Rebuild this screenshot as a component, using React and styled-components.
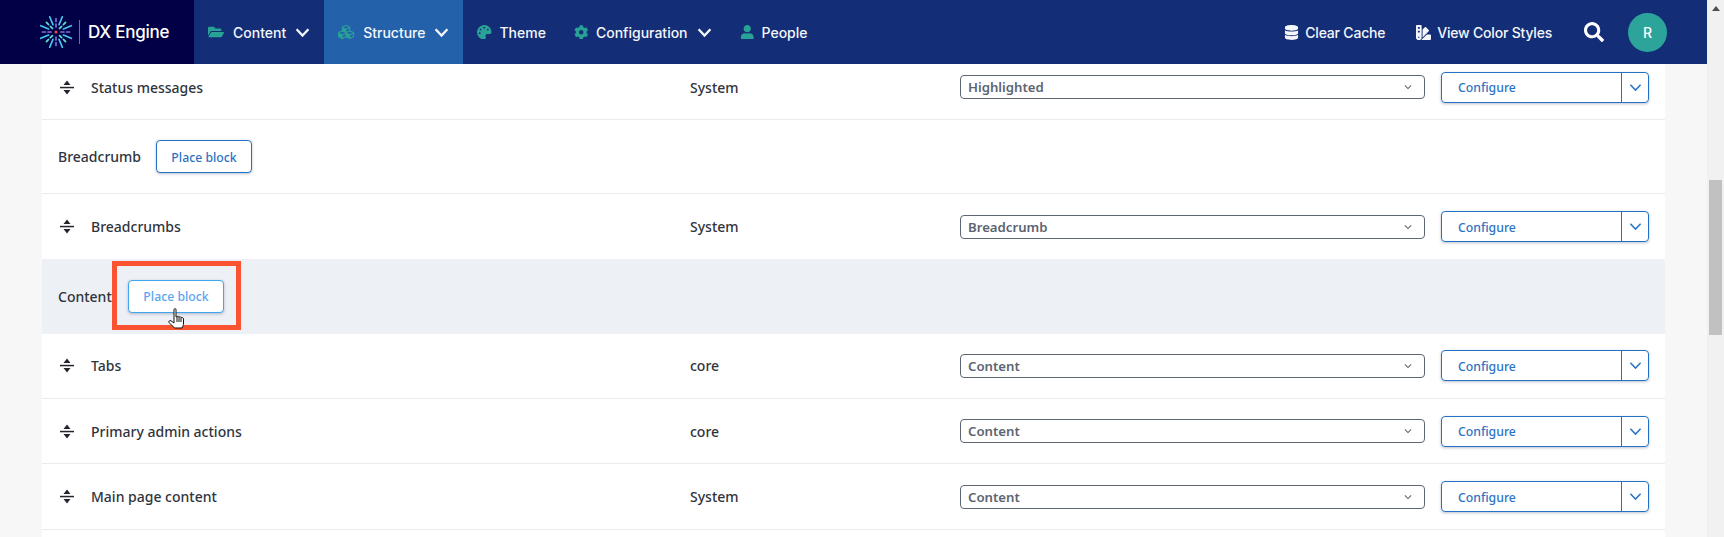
import React from 'react'
import styled, { createGlobalStyle } from 'styled-components'
import {
    FaFolderOpen, FaCubes, FaPalette, FaCog, FaUser, FaDatabase, FaSwatchbook, FaSearch,
} from 'react-icons/fa'

const GlobalStyle = createGlobalStyle`
    html, body {
        margin: 0;
        height: 100%;
        overflow: hidden;
        background: #f7f7f7;
    }
    * { box-sizing: border-box; }
`

const Page = styled.div`
    display: flex;
    height: 100vh;
`

const Main = styled.div`
    flex: 1;
    min-width: 0;
    display: flex;
    flex-direction: column;
`

const Navbar = styled.header`
    flex: none;
    height: 64px;
    display: flex;
    align-items: stretch;
    background: #132e77;
    font-family: Inter, "Liberation Sans", sans-serif;
    color: #f4f6fb;
`

const Brand = styled.div`
    width: 194px;
    display: flex;
    align-items: center;
    padding-left: 39px;
    background: #010047;
`

const BrandDivider = styled.span`
    width: 1px;
    height: 24px;
    margin: 0 8px 0 6px;
    background: #6f7199;
`

const BrandName = styled.span`
    font-size: 17px;
    font-weight: 500;
    letter-spacing: -0.25px;
    color: #fff;
`

const NavItem = styled.div`
    display: flex;
    align-items: center;
    padding: 0 14px;
    font-size: 14px;
    font-weight: 500;
    background: ${props => (props.active ? '#2361ab' : 'transparent')};
    svg.nav-icon {
        width: ${props => (props.wide ? '16px' : '14.5px')};
        height: ${props => (props.wide ? '16px' : '14.5px')};
        margin-right: ${props => (props.wide ? '9px' : '7.5px')};
        color: #29a196;
    }
    svg.nav-chevron {
        margin-left: 9px;
    }
`

const NavRight = styled.div`
    margin-left: auto;
    margin-right: 40px;
    display: flex;
    align-items: center;
`

const ToolLink = styled.div`
    display: flex;
    align-items: center;
    gap: 6px;
    margin-right: 31px;
    font-size: 14px;
    font-weight: 500;
    letter-spacing: -0.2px;
    svg {
        width: auto;
        height: 15px;
    }
`

const SearchButton = styled.div`
    display: flex;
    margin: 0 24px 0 1px;
    color: #fff;
    svg {
        width: 20px;
        height: 20px;
    }
`

const Avatar = styled.div`
    width: 39px;
    height: 39px;
    border-radius: 50%;
    display: flex;
    align-items: center;
    justify-content: center;
    background: #2ca49a;
    font-size: 14px;
    font-weight: 500;
    color: #fff;
`

const Panel = styled.main`
    flex: 1;
    min-height: 0;
    margin: 0 42px;
    overflow: hidden;
    background: #fff;
    font-family: "Noto Sans", "Open Sans", sans-serif;
    font-size: 14px;
    font-weight: 500;
    color: #30343d;
`

/* the page is scrolled, the first row is cut off by the header */
const BlockTable = styled.div`
    margin-top: -9px;
`

const BlockRow = styled.div`
    height: 65.35px;
    display: grid;
    grid-template-columns: 31px 599px 270px 481px 208px;
    align-items: center;
    padding: 0 16px 0 18px;
    border-bottom: 1px solid #ebebeb;
`

const RegionRow = styled.div`
    position: relative;
    height: ${props => (props.active ? '75px' : '74px')};
    margin-top: ${props => (props.active ? '-1px' : '0')};
    display: flex;
    align-items: center;
    gap: 16px;
    padding-left: 16px;
    background: ${props => (props.active ? '#edf0f5' : '#fff')};
    border-bottom: ${props => (props.active ? 'none' : '1px solid #ebebeb')};
`

const RegionLabel = styled.span`
    width: ${props => props.width}px;
    white-space: nowrap;
`

const PlaceButton = styled.button`
    width: 96px;
    height: 33px;
    padding: 1px 0 0;
    border: 1px solid ${props => (props.hovered ? '#3ea6ee' : '#2271c4')};
    border-radius: 4px;
    background: #fff;
    box-shadow: 0 1px 3px rgba(30, 50, 90, 0.3);
    font: inherit;
    font-size: 12.25px;
    color: ${props => (props.hovered ? '#5aa5ef' : '#2b73c4')};
`

const Highlight = styled.div`
    position: absolute;
    left: 70px;
    top: 2px;
    width: 129px;
    height: 69px;
    border: 5px solid #fb5231;
    pointer-events: none;
`

const Cursor = styled.svg`
    position: absolute;
    left: 126px;
    top: 49px;
    width: 18px;
    height: 21px;
`

const RegionSelect = styled.div`
    width: 465px;
    height: 24px;
    display: flex;
    align-items: center;
    justify-content: space-between;
    padding: 0 12px 0 7px;
    border: 1px solid #5f6673;
    border-radius: 4px;
    font-size: 13.2px;
    font-weight: 600;
    color: #5d6471;
`

const SplitButton = styled.div`
    width: 208px;
    height: 31px;
    display: flex;
    border: 1px solid #2271c4;
    border-radius: 4px;
    box-shadow: 0 1px 3px rgba(30, 50, 90, 0.3);
    font-size: 12.25px;
    color: #2b73c4;
`

const SplitLabel = styled.span`
    flex: 1;
    display: flex;
    align-items: center;
    padding: 1px 0 0 16px;
    border-right: 1px solid #2271c4;
`

const SplitToggle = styled.span`
    width: 26px;
    display: flex;
    align-items: center;
    justify-content: center;
`

const Scrollbar = styled.aside`
    flex: none;
    width: 17px;
    background: #f1f1f1;
`

const ScrollArrow = styled.div`
    width: 0;
    margin: 6px auto 0;
    border: 4px solid transparent;
    border-top: 0;
    border-bottom: 5px solid #505050;
`

const ScrollThumb = styled.div`
    width: 13px;
    height: 155px;
    margin: 169px 0 0 2px;
    background: #c1c1c1;
`

const Chevron = ({ size = 15, width = 2.2, color = 'currentColor', className }) => (
    <svg className={className} width={size} height={size} viewBox="0 0 14 14" fill="none">
        <path d="M1.5 4 L7 9.8 L12.5 4" stroke={color} strokeWidth={width} />
    </svg>
)

const DragHandle = () => (
    <svg width="14" height="15" viewBox="0 0 14 15">
        <path d="M7 0.5 L10.5 5 H3.5 Z M7 14.5 L3.5 10 H10.5 Z" fill="#23262d" />
        <rect x="0" y="6.8" width="14" height="1.5" fill="#23262d" />
    </svg>
)

const rayColors = ['#7c6fd8', '#46c6ee', '#5fe0cf', '#46c6ee']

const Logo = () => (
    <svg width="34" height="34" viewBox="-17 -17 34 34">
        {Array.from({ length: 16 }, (_, i) => {
            const a = (i * Math.PI) / 8
            const inner = i % 2 ? 8 : 5
            const outer = i % 2 ? 16.5 : 13.5
            return (
                <line
                    key={i}
                    x1={Math.sin(a) * inner}
                    y1={-Math.cos(a) * inner}
                    x2={Math.sin(a) * outer}
                    y2={-Math.cos(a) * outer}
                    stroke={rayColors[i % 4]}
                    strokeWidth="1.7"
                    strokeLinecap="round"
                    strokeDasharray={i % 2 ? 'none' : '3 2.5'}
                />
            )
        })}
        <circle r="1.5" fill="#ef4a3c" />
    </svg>
)

const HandCursor = () => (
    <Cursor viewBox="0 0 18 21">
        <path
            d="M6 1.5 C6 .4 8 .4 8 1.5 V9 L9 8.5 C10 8 10.8 8.6 11 9 C12 8.5 12.8 9 13 9.6 C14 9.2 15.5 9.8 15.5 11 V15 C15.5 17 15 18 14 20 H6.5 L1 14.5 C.3 13.5 1.5 12 3 12.8 L6 15 Z"
            fill="#fff"
            stroke="#111"
            strokeWidth="1"
        />
        <path d="M9 9 V14 M11 9 V14 M13 10 V14" stroke="#111" strokeWidth="1" fill="none" />
    </Cursor>
)

const navItems = [
    { label: 'Content', Icon: FaFolderOpen, chevron: true, wide: true },
    { label: 'Structure', Icon: FaCubes, chevron: true, wide: true, active: true },
    { label: 'Theme', Icon: FaPalette },
    { label: 'Configuration', Icon: FaCog, chevron: true },
    { label: 'People', Icon: FaUser },
]

const Block = ({ name, category, region }) => (
    <BlockRow>
        <DragHandle />
        <span>{name}</span>
        <span>{category}</span>
        <RegionSelect>
            {region}
            <Chevron size={8} width={1.8} color="#5d6471" />
        </RegionSelect>
        <SplitButton>
            <SplitLabel>Configure</SplitLabel>
            <SplitToggle><Chevron size={13} width={1.6} /></SplitToggle>
        </SplitButton>
    </BlockRow>
)

const App = () => (
    <Page>
        <GlobalStyle />
        <Main>
            <Navbar>
                <Brand>
                    <Logo />
                    <BrandDivider />
                    <BrandName>DX Engine</BrandName>
                </Brand>
                {navItems.map(({ label, Icon, chevron, active, wide }) => (
                    <NavItem key={label} active={active} wide={wide}>
                        <Icon className="nav-icon" />
                        {label}
                        {chevron && <Chevron className="nav-chevron" />}
                    </NavItem>
                ))}
                <NavRight>
                    <ToolLink><FaDatabase />Clear Cache</ToolLink>
                    <ToolLink><FaSwatchbook />View Color Styles</ToolLink>
                    <SearchButton><FaSearch /></SearchButton>
                    <Avatar>R</Avatar>
                </NavRight>
            </Navbar>
            <Panel>
                <BlockTable>
                    <Block name="Status messages" category="System" region="Highlighted" />
                    <RegionRow>
                        <RegionLabel width={82}>Breadcrumb</RegionLabel>
                        <PlaceButton>Place block</PlaceButton>
                    </RegionRow>
                    <Block name="Breadcrumbs" category="System" region="Breadcrumb" />
                    <RegionRow active>
                        <RegionLabel width={54}>Content</RegionLabel>
                        <PlaceButton hovered>Place block</PlaceButton>
                        <Highlight />
                        <HandCursor />
                    </RegionRow>
                    <Block name="Tabs" category="core" region="Content" />
                    <Block name="Primary admin actions" category="core" region="Content" />
                    <Block name="Main page content" category="System" region="Content" />
                </BlockTable>
            </Panel>
        </Main>
        <Scrollbar>
            <ScrollArrow />
            <ScrollThumb />
        </Scrollbar>
    </Page>
)

export default App
